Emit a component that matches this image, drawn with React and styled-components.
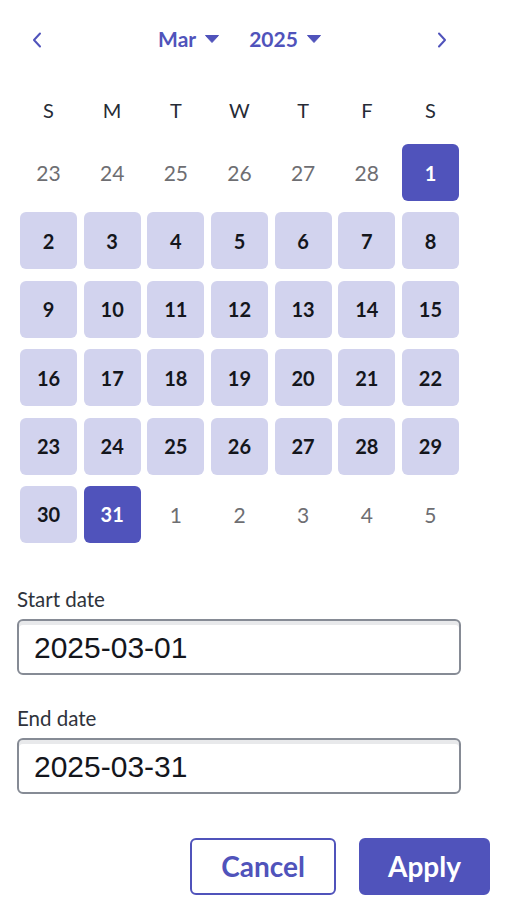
import React from 'react';
import styled, { createGlobalStyle } from 'styled-components';

const GlobalStyle = createGlobalStyle`
  body {
    margin: 0;
    background: #ffffff;
    font-family: Lato, "Noto Sans", sans-serif;
  }
`;

const Page = styled.div`
  width: 507px;
  padding: 22px 17px 0;
  box-sizing: border-box;
`;

const Header = styled.div`
  display: flex;
  align-items: center;
  justify-content: space-between;
  width: 439px;
  margin-left: 3px;
  height: 36px;
`;

const NavButton = styled.button`
  width: 34px;
  height: 34px;
  display: flex;
  align-items: center;
  justify-content: center;
  background: transparent;
  border: none;
  padding: 0;
  color: #5053bb;
`;

const Selects = styled.div`
  display: flex;
  align-items: center;
  gap: 30px;
  margin-top: -3px;
`;

const Select = styled.div`
  display: flex;
  align-items: center;
  gap: 9px;
  color: #5053bb;
  font-size: 21px;
  font-weight: 700;
`;

const Weekdays = styled.div`
  display: grid;
  grid-template-columns: repeat(7, 57px);
  justify-content: space-between;
  width: 439px;
  margin: 34px 0 0 3px;
  height: 36px;
  align-items: center;
`;

const Weekday = styled.div`
  text-align: center;
  font-size: 20px;
  color: #262b36;
`;

const Days = styled.div`
  display: grid;
  grid-template-columns: repeat(7, 57px);
  grid-auto-rows: 57px;
  justify-content: space-between;
  row-gap: 11.4px;
  width: 439px;
  margin: 16px 0 0 3px;
`;

const Day = styled.div`
  display: flex;
  align-items: center;
  justify-content: center;
  border-radius: 6px;
  font-size: ${p => (p.$kind === 'outside' ? '21px' : '20px')};
  font-weight: ${p => (p.$kind === 'outside' ? 400 : 700)};
  background: ${p =>
    p.$kind === 'edge' ? '#5053bb' : p.$kind === 'range' ? '#d2d3ee' : 'transparent'};
  color: ${p =>
    p.$kind === 'edge' ? '#ffffff' : p.$kind === 'range' ? '#14161c' : '#6e6e72'};
`;

const Field = styled.div`
  display: flex;
  flex-direction: column;
  margin-top: ${p => p.$top}px;
`;

const Label = styled.label`
  font-size: 20.5px;
  color: #2f333b;
  margin-bottom: 9px;
  line-height: 22px;
`;

const Input = styled.div`
  width: 444px;
  height: 56px;
  box-sizing: border-box;
  border: 2px solid #868b95;
  border-radius: 6px;
  box-shadow: inset 0 4px 0 #e8e9eb;
  display: flex;
  align-items: center;
  padding: 3px 0 0 15px;
  font-family: "Liberation Sans", Arial, sans-serif;
  font-size: 30px;
  color: #14161c;
`;

const Actions = styled.div`
  display: flex;
  justify-content: flex-end;
  gap: 23px;
  margin: 44px 0 0;
  width: 473px;
`;

const Button = styled.button`
  height: 57px;
  width: ${p => p.$w}px;
  box-sizing: border-box;
  border-radius: 6px;
  border: 2px solid #5053bb;
  background: ${p => (p.$primary ? '#5053bb' : '#ffffff')};
  color: ${p => (p.$primary ? '#ffffff' : '#5053bb')};
  font-family: Lato, "Noto Sans", sans-serif;
  font-size: 28px;
  font-weight: 700;
  padding: 0;
`;

const Chevron = ({ dir }) => (
  <svg width="10" height="16" viewBox="0 0 10 16" fill="none" stroke="currentColor" strokeWidth="2" strokeLinecap="round" strokeLinejoin="round">
    {dir === 'left' ? <polyline points="8,1.5 2,8 8,14.5" /> : <polyline points="2,1.5 8,8 2,14.5" />}
  </svg>
);

const Caret = () => (
  <svg width="14" height="8" viewBox="0 0 14 8" fill="currentColor">
    <path d="M0.5 0.5 H13.5 L7 7.5 Z" strokeLinejoin="round" stroke="currentColor" strokeWidth="1" />
  </svg>
);

const weekdays = ['S', 'M', 'T', 'W', 'T', 'F', 'S'];

const days = [
  ...[23, 24, 25, 26, 27, 28].map(n => ({ n, kind: 'outside' })),
  ...Array.from({ length: 31 }, (_, i) => ({
    n: i + 1,
    kind: i === 0 || i === 30 ? 'edge' : 'range',
  })),
  ...[1, 2, 3, 4, 5].map(n => ({ n, kind: 'outside' })),
];

export default function App() {
  return (
    <>
      <GlobalStyle />
      <Page>
        <Header>
          <NavButton aria-label="Previous month">
            <Chevron dir="left" />
          </NavButton>
          <Selects>
            <Select>
              Mar <Caret />
            </Select>
            <Select>
              2025 <Caret />
            </Select>
          </Selects>
          <NavButton aria-label="Next month">
            <Chevron dir="right" />
          </NavButton>
        </Header>

        <Weekdays>
          {weekdays.map((d, i) => (
            <Weekday key={i}>{d}</Weekday>
          ))}
        </Weekdays>

        <Days>
          {days.map((d, i) => (
            <Day key={i} $kind={d.kind}>
              {d.n}
            </Day>
          ))}
        </Days>

        <Field $top={45}>
          <Label>Start date</Label>
          <Input>2025-03-01</Input>
        </Field>

        <Field $top={32}>
          <Label>End date</Label>
          <Input>2025-03-31</Input>
        </Field>

        <Actions>
          <Button $w={146}>Cancel</Button>
          <Button $w={131} $primary>Apply</Button>
        </Actions>
      </Page>
    </>
  );
}
